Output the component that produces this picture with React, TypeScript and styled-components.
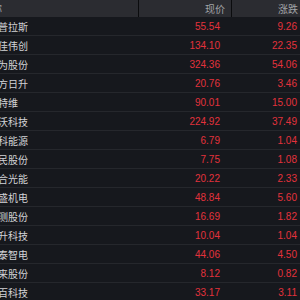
import React from 'react';
import styled, { createGlobalStyle } from 'styled-components';

const GlobalStyle = createGlobalStyle`
	html, body {
		margin: 0;
		padding: 0;
		background: #16181d;
	}
	body {
		font-family: "Liberation Sans", "Noto Sans CJK SC", sans-serif;
	}
`;

const Viewport = styled.div`
	width: 300px;
	height: 300px;
	overflow: hidden;
	background: #16181d;
`;

// the table is scrolled a little to the right, so the name column starts off-screen
const Table = styled.div`
	width: 320px;
	margin-left: -20px;
	display: flex;
	flex-direction: column;
	font-size: 10px;
`;

const Columns = styled.div`
	display: grid;
	grid-template-columns: 159px 93px 68px;
`;

const HeaderRow = styled(Columns)`
	height: 17px;
	background: #2b2c31;
	color: #a3a4a8;
`;

const HeaderCell = styled.div<{ $align?: 'left' | 'right'; $pad: number; $divider?: boolean }>`
	display: flex;
	align-items: center;
	justify-content: ${(p) => (p.$align === 'left' ? 'flex-start' : 'flex-end')};
	padding: ${(p) => (p.$align === 'left' ? `0 0 0 ${p.$pad}px` : `0 ${p.$pad}px 0 0`)};
	border-right: ${(p) => (p.$divider ? '1px solid #0b0c0e' : 'none')};
	white-space: nowrap;
`;

const Row = styled(Columns)`
	height: 18px;
	border-bottom: 1px solid #25272c;
`;

const Name = styled.div`
	display: flex;
	align-items: center;
	padding-left: 8px;
	color: #d2d3d6;
	white-space: nowrap;
`;

const Num = styled.div<{ $pad: number }>`
	display: flex;
	align-items: center;
	justify-content: flex-end;
	padding-right: ${(p) => p.$pad}px;
	color: #e3323c;
`;

const stocks = [
	{ name: '拉普拉斯', price: '55.54', change: '9.26' },
	{ name: '捷佳伟创', price: '134.10', change: '22.35' },
	{ name: '迈为股份', price: '324.36', change: '54.06' },
	{ name: '东方日升', price: '20.76', change: '3.46' },
	{ name: '奥特维', price: '90.01', change: '15.00' },
	{ name: '天沃科技', price: '224.92', change: '37.49' },
	{ name: '晶科能源', price: '6.79', change: '1.04' },
	{ name: '亿民股份', price: '7.75', change: '1.08' },
	{ name: '天合光能', price: '20.22', change: '2.33' },
	{ name: '晶盛机电', price: '48.84', change: '5.60' },
	{ name: '高测股份', price: '16.69', change: '1.82' },
	{ name: '晶升科技', price: '10.04', change: '1.04' },
	{ name: '科泰智电', price: '44.06', change: '4.50' },
	{ name: '金来股份', price: '8.12', change: '0.82' },
	{ name: '万百科技', price: '33.17', change: '3.11' },
];

const App = () => {
	return (
		<Viewport>
			<GlobalStyle />
			<Table>
				<HeaderRow>
					<HeaderCell $align="left" $pad={2} $divider>
						名称
					</HeaderCell>
					<HeaderCell $pad={6} $divider>
						现价
					</HeaderCell>
					<HeaderCell $pad={2}>涨跌</HeaderCell>
				</HeaderRow>
				{stocks.map((s) => (
					<Row key={s.name}>
						<Name>{s.name}</Name>
						<Num $pad={12}>{s.price}</Num>
						<Num $pad={3}>{s.change}</Num>
					</Row>
				))}
			</Table>
		</Viewport>
	);
};

export default App;
